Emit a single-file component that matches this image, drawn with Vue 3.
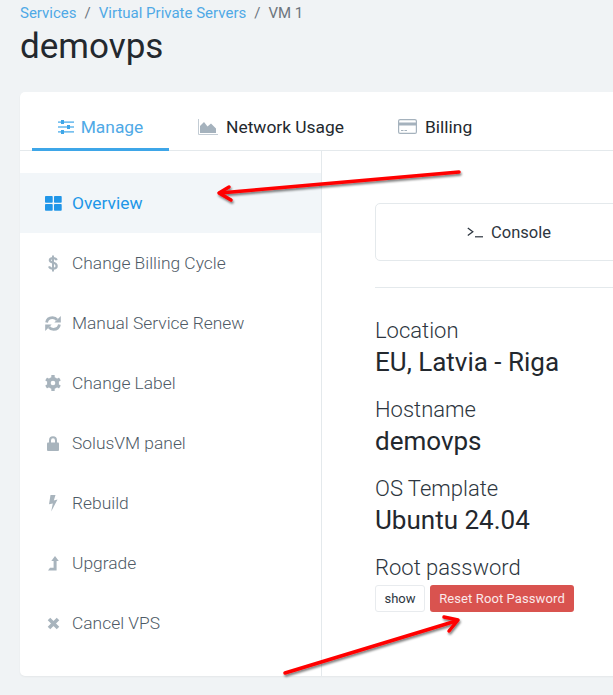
<script setup>
const crumbs = ['Services', 'Virtual Private Servers']

const menu = [
  { label: 'Overview', icon: 'grid', active: true },
  { label: 'Change Billing Cycle', icon: 'dollar' },
  { label: 'Manual Service Renew', icon: 'refresh' },
  { label: 'Change Label', icon: 'gear' },
  { label: 'SolusVM panel', icon: 'lock' },
  { label: 'Rebuild', icon: 'bolt' },
  { label: 'Upgrade', icon: 'upgrade' },
  { label: 'Cancel VPS', icon: 'times' }
]

const info = [
  { label: 'Location', value: 'EU, Latvia - Riga' },
  { label: 'Hostname', value: 'demovps' },
  { label: 'OS Template', value: 'Ubuntu 24.04' }
]
</script>

<template>
  <div class="page">
    <div class="breadcrumb">
      <template v-for="c in crumbs" :key="c">
        <a class="crumb">{{ c }}</a>
        <span class="sep">/</span>
      </template>
      <span class="current">VM 1</span>
    </div>
    <h1 class="title">demovps</h1>

    <div class="card">
      <div class="tabs">
        <div class="tab active">
          <svg class="tab-icon" width="16" height="14" viewBox="0 0 16 14">
            <g fill="#3ea6e8">
              <rect x="0" y="1.5" width="16" height="1.2" />
              <rect x="0" y="6.4" width="16" height="1.2" />
              <rect x="0" y="11.3" width="16" height="1.2" />
              <rect x="3" y="0" width="3" height="4" />
              <rect x="9" y="5" width="3" height="4" />
              <rect x="3" y="10" width="3" height="4" />
            </g>
          </svg>
          <span>Manage</span>
        </div>
        <div class="tab">
          <svg class="tab-icon" width="20" height="16" viewBox="0 0 20 16">
            <path d="M0.5 0v15.5H20" fill="none" stroke="#c3ccd4" stroke-width="1" />
            <path d="M2 14V7l4-4 3.5 4.5L13 4.5l5 5V14z" fill="#a5b2bd" />
          </svg>
          <span>Network Usage</span>
        </div>
        <div class="tab">
          <svg class="tab-icon" width="19" height="15" viewBox="0 0 19 15">
            <rect x="0.6" y="0.6" width="17.8" height="13.8" rx="1.5" fill="#fff" stroke="#a5b2bd" stroke-width="1.2" />
            <rect x="1" y="3.5" width="17" height="3" fill="#a5b2bd" />
            <rect x="3" y="11" width="2.5" height="1" fill="#a5b2bd" />
            <rect x="6.5" y="11" width="2.5" height="1" fill="#a5b2bd" />
          </svg>
          <span>Billing</span>
        </div>
      </div>

      <div class="body">
        <ul class="menu">
          <li v-for="m in menu" :key="m.label" class="menu-item" :class="{ active: m.active }">
            <span class="menu-icon">
              <svg v-if="m.icon === 'grid'" width="17" height="15" viewBox="0 0 17 15" fill="#2196e8">
                <rect x="0" y="0" width="7.7" height="6.7" rx="0.8" />
                <rect x="9" y="0" width="7.7" height="6.7" rx="0.8" />
                <rect x="0" y="8" width="7.7" height="6.7" rx="0.8" />
                <rect x="9" y="8" width="7.7" height="6.7" rx="0.8" />
              </svg>
              <svg v-else-if="m.icon === 'dollar'" width="10" height="17" viewBox="0 0 10 17">
                <path d="M8.6 5.2C8.2 3.800 6.800 3.200 5 3.200 3 3.200 1.800 4 1.800 5.300c0 3 6.900 1.500 6.900 5.700 0 1.600-1.500 2.700-3.700 2.700-2.100 0-3.500-.8-4-2.300" fill="none" stroke="#a8b4bd" stroke-width="2.2" />
                <rect x="4" y="0.5" width="2" height="16" fill="#a8b4bd" />
              </svg>
              <svg v-else-if="m.icon === 'refresh'" width="16" height="15" viewBox="0 0 16 15">
                <path d="M1.600 6.500C2 3.600 4.400 1.700 7.500 1.700c2 0 3.500.8 4.500 2.200" fill="none" stroke="#a8b4bd" stroke-width="2.8" />
                <path d="M15.800 0v6.500H9.300z" fill="#a8b4bd" />
                <path d="M14.400 8.500C14 11.400 11.600 13.300 8.500 13.300c-2 0-3.500-.8-4.500-2.200" fill="none" stroke="#a8b4bd" stroke-width="2.8" />
                <path d="M.2 15V8.500h6.500z" fill="#a8b4bd" />
              </svg>
              <svg v-else-if="m.icon === 'gear'" width="16" height="16" viewBox="0 0 16 16">
                <circle cx="8" cy="8" r="4.3" fill="none" stroke="#a8b4bd" stroke-width="3.4" />
                <g fill="#a8b4bd">
                  <rect x="6.3" y="0" width="3.4" height="16" rx="0.5" />
                  <rect x="6.3" y="0" width="3.4" height="16" rx="0.5" transform="rotate(60 8 8)" />
                  <rect x="6.3" y="0" width="3.4" height="16" rx="0.5" transform="rotate(120 8 8)" />
                </g>
                <circle cx="8" cy="8" r="2.3" fill="#fff" />
              </svg>
              <svg v-else-if="m.icon === 'lock'" width="12" height="15" viewBox="0 0 12 15">
                <path d="M3 7V4.500C3 2.700 4.300 1.300 6 1.300s3 1.400 3 3.200V7" fill="none" stroke="#a8b4bd" stroke-width="2" />
                <rect x="0" y="6.5" width="12" height="8.5" rx="1" fill="#a8b4bd" />
              </svg>
              <svg v-else-if="m.icon === 'bolt'" width="10" height="17" viewBox="0 0 10 17">
                <path d="M2.500 0h5L5.800 5.400 9.500 4.600 3.200 16.500 4.800 8.400 1 9.200z" fill="#a8b4bd" />
              </svg>
              <svg v-else-if="m.icon === 'upgrade'" width="11" height="15" viewBox="0 0 11 15">
                <path d="M7 0l3.800 5H8.600v9.500H0l2-2.700h3.600V5H3.300z" fill="#a8b4bd" />
              </svg>
              <svg v-else width="13" height="13" viewBox="0 0 13 13">
                <path d="M2 2l9 9M11 2l-9 9" fill="none" stroke="#a8b4bd" stroke-width="3.6" />
              </svg>
            </span>
            <span>{{ m.label }}</span>
          </li>
        </ul>

        <div class="content">
          <div class="console">
            <svg width="16" height="11" viewBox="0 0 16 11">
              <path d="M.8 1l5 3.800-5 3.800" fill="none" stroke="#2d3640" stroke-width="1.3" />
              <rect x="8" y="9.2" width="8" height="1.2" fill="#2d3640" />
            </svg>
            <span>Console</span>
          </div>
          <hr class="divider" />
          <div v-for="i in info" :key="i.label" class="info">
            <div class="info-label">{{ i.label }}</div>
            <div class="info-value">{{ i.value }}</div>
          </div>
          <div class="info-label">Root password</div>
          <div class="actions">
            <button class="btn show">show</button>
            <button class="btn reset">Reset Root Password</button>
          </div>
        </div>
      </div>
    </div>

    <svg class="arrows" width="613" height="695" viewBox="0 0 613 695">
      <defs>
        <filter id="sh" x="-10%" y="-50%" width="120%" height="200%">
          <feDropShadow dx="1" dy="2" stdDeviation="1.2" flood-color="#000" flood-opacity="0.5" />
        </filter>
      </defs>
      <g filter="url(#sh)" fill="none" stroke="#f00" stroke-width="3.5" stroke-linecap="round" stroke-linejoin="round">
        <path d="M459 172L220 193" />
        <path d="M229 187L219 193 231 200" />
        <path d="M285 673L456 621" />
        <path d="M444 617L458 620 449 631" />
      </g>
    </svg>
  </div>
</template>

<style scoped>
.page {
  position: relative;
  width: 613px;
  height: 695px;
  overflow: hidden;
  background: #f0f3f5;
  font-family: Roboto, "Liberation Sans", sans-serif;
  color: #2d3640;
}

.breadcrumb {
  display: flex;
  gap: 8px;
  padding: 5px 0 0 20px;
  font-size: 15px;
  line-height: 16px;
}

.crumb {
  color: #4fa9e6;
}

.sep,
.current {
  color: #6c757d;
}

.title {
  margin: 6px 0 0 20px;
  font-size: 35px;
  line-height: 40px;
  font-weight: 400;
  color: #23282e;
}

.card {
  width: 700px;
  margin: 25px 0 0 20px;
  background: #fff;
  border-radius: 5px;
  box-shadow: 0 1px 2px rgba(0, 0, 0, 0.05);
}

.tabs {
  display: flex;
  height: 58px;
  padding-left: 12px;
  border-bottom: 1px solid #e4e9ec;
}

.tab {
  display: flex;
  align-items: center;
  gap: 8px;
  height: 59px;
  padding: 10px 26px 0;
  box-sizing: border-box;
  font-size: 17.4px;
  color: #23282e;
  margin-right: 2px;
}

.tab.active {
  width: 137px;
  gap: 7px;
  margin-right: 3px;
  justify-content: center;
  color: #4fa9e6;
  border-bottom: 3px solid #3ea6e8;
  padding: 13px 0 0;
}

.body {
  display: flex;
}

.menu {
  width: 301px;
  flex-shrink: 0;
  margin: 0;
  padding: 22px 0 23px;
  list-style: none;
  border-right: 1px solid #e4e9ec;
}

.menu-item {
  display: flex;
  align-items: center;
  height: 60px;
  padding-left: 24px;
  font-size: 17.4px;
  font-weight: 300;
  color: #4e5a66;
}

.menu-item.active {
  background: #f2f6f9;
  color: #2196e8;
  font-weight: 400;
}

.menu-icon {
  display: flex;
  justify-content: center;
  align-items: center;
  width: 18px;
  margin-right: 10px;
}

.content {
  flex: 1;
  padding: 52px 0 0 53px;
}

.console {
  display: flex;
  align-items: center;
  justify-content: center;
  gap: 8px;
  width: 268px;
  height: 58px;
  box-sizing: border-box;
  border: 1px solid #e4e9ec;
  border-radius: 5px;
  font-size: 16.5px;
}

.divider {
  width: 300px;
  margin: 26px 0 28px;
  border: 0;
  border-top: 1px solid #e4e9ec;
}

.info {
  margin-bottom: 16px;
}

.info-label {
  font-size: 22px;
  line-height: 30px;
  font-weight: 300;
  color: #2d3640;
}

.info-value {
  font-size: 26px;
  line-height: 33px;
  font-weight: 400;
  color: #23282e;
}

.actions {
  display: flex;
  gap: 5px;
  margin-top: 2px;
}

.btn {
  height: 27px;
  border-radius: 3px;
  font-family: inherit;
  font-size: 13px;
  padding: 0;
}

.show {
  width: 50px;
  background: #fff;
  border: 1px solid #e8ebee;
  color: #2d3640;
}

.reset {
  width: 144px;
  background: #d9534f;
  border: 0;
  color: #fbe9ea;
  letter-spacing: 0.1px;
}

.arrows {
  position: absolute;
  left: 0;
  top: 0;
  pointer-events: none;
}
</style>

<style>
html,
body {
  margin: 0;
  background: #f0f3f5;
}
</style>
